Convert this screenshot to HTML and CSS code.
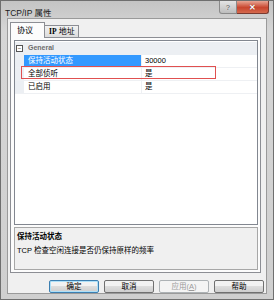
FILE: index.html
```html
<!DOCTYPE html>
<html lang="zh-CN">
<head>
    <meta charset="UTF-8">
    <title>TCP/IP 属性</title>
    <link rel="stylesheet" href="styles.css">
</head>
<body>
    <div class="window">
        <div class="titlebar">
            <span class="title">TCP/IP 属性</span>
            <div class="caption-btns">
                <span class="cap help">?</span>
                <span class="cap close">✕</span>
            </div>
        </div>
        <div class="client">
            <div class="tabs">
                <span class="tab active">协议</span>
                <span class="tab"><b>IP</b> 地址</span>
            </div>
            <div class="panel">
                <div class="grid">
                    <div class="row category">
                        <span class="margin"><span class="toggle">−</span></span>
                        <span class="cat-name">General</span>
                    </div>
                    <div class="row selected">
                        <span class="margin"></span>
                        <span class="name">保持活动状态</span>
                        <span class="value">30000</span>
                    </div>
                    <div class="row marked">
                        <span class="margin"></span>
                        <span class="name">全部侦听</span>
                        <span class="value">是</span>
                        <span class="mark"></span>
                    </div>
                    <div class="row">
                        <span class="margin"></span>
                        <span class="name">已启用</span>
                        <span class="value">是</span>
                    </div>
                </div>
                <div class="desc">
                    <div class="desc-title">保持活动状态</div>
                    <div class="desc-text">TCP 检查空闲连接是否仍保持原样的频率</div>
                </div>
            </div>
            <div class="buttons">
                <button class="btn default">确定</button>
                <button class="btn">取消</button>
                <button class="btn" disabled>应用(<u>A</u>)</button>
                <button class="btn">帮助</button>
            </div>
        </div>
    </div>
</body>
</html>
```

FILE: styles.css
```css
body {
    margin: 0;
    font-family: "Liberation Sans", "Noto Sans CJK SC", sans-serif;
    font-size: 7.5px;
    color: #000;
}
.window {
    width: 274px;
    height: 300px;
    box-sizing: border-box;
    border: 1px solid #6f6f6f;
    background: linear-gradient(#c4c4c4, #d6d6d6 30px, #cfcfcf);
    display: flex;
    flex-direction: column;
}
.titlebar {
    height: 19px;
    display: flex;
    justify-content: space-between;
    align-items: flex-start;
}
.title {
    font-size: 8.5px;
    margin: 5px 0 0 4px;
    color: #1a1a1a;
}
.caption-btns {
    display: flex;
    margin-right: 4px;
}
.cap {
    height: 12px;
    display: flex;
    align-items: center;
    justify-content: center;
    border: 1px solid #8a8a8a;
    border-top: none;
    font-weight: bold;
    color: #fff;
}
.help {
    width: 16px;
    border-radius: 0 0 0 3px;
    background: linear-gradient(#e4e4e4, #bdbdbd);
    color: #7a7a7a;
    font-size: 8px;
    text-shadow: 0 0 1px #fff;
}
.close {
    width: 31px;
    border-left: none;
    border-color: #7a3a30;
    border-radius: 0 0 3px 0;
    background: linear-gradient(#e8a594, #c8452e 55%, #d56a4e);
    font-size: 8px;
    text-shadow: 0 0 1px #5a1a10;
}
.client {
    flex: 1;
    margin: 0 6px 6px;
    border: 1px solid #9a9a9a;
    background: #f0f0f0;
    display: flex;
    flex-direction: column;
}
.tabs {
    display: flex;
    align-items: flex-end;
    margin: 3px 0 0 2px;
    height: 16px;
    position: relative;
    z-index: 1;
}
.tab {
    box-sizing: border-box;
    width: 34px;
    height: 12px;
    padding-left: 4px;
    white-space: nowrap;
    border: 1px solid #8c8e94;
    border-bottom: none;
    border-left: none;
    background: linear-gradient(#f2f2f2, #dcdcdc);
    font-size: 8px;
    line-height: 11px;
    margin-bottom: 1px;
}
.tab b {
    font-family: "Liberation Serif", serif;
    font-size: 7.5px;
}
.tab.active {
    width: 35px;
    height: 16px;
    padding-left: 6px;
    border-left: 1px solid #8c8e94;
    background: #fcfcfc;
    margin-bottom: 0;
    line-height: 15px;
}
.panel {
    margin: -1px 5px 0 2px;
    height: 230px;
    border: 1px solid #8c8e94;
    background: #fcfcfc;
    padding: 2px 2px 2px 3px;
    display: flex;
    flex-direction: column;
    gap: 2px;
}
.grid {
    height: 183px;
    border: 1px solid #828790;
    background: #fff;
    padding-top: 1px;
}
.row {
    display: flex;
    height: 12px;
    border-bottom: 1px solid #eef0f3;
    line-height: 12px;
    position: relative;
}
.margin {
    width: 9px;
    background: #eceff3;
    display: flex;
    align-items: center;
    justify-content: center;
}
.toggle {
    width: 5px;
    height: 5px;
    border: 1px solid #555;
    background: #fff;
    font-size: 6px;
    line-height: 4px;
    text-align: center;
    color: #222;
}
.category {
    background: #eceff3;
    border-bottom-color: #eceff3;
}
.cat-name {
    font-weight: bold;
    color: #6d6d6d;
    padding-left: 4px;
    font-size: 7px;
}
.name {
    width: 113px;
    padding-left: 4px;
    border-right: 1px solid #eef0f3;
}
.value {
    padding-left: 3px;
}
.selected .name {
    background: #3399ff;
    color: #fff;
}
.mark {
    position: absolute;
    left: 6px;
    top: -2px;
    width: 193px;
    height: 11px;
    border: 1px solid #e05050;
}
.desc {
    height: 37px;
    border: 1px solid #a7a7a7;
    background: #f0f0f0;
    padding: 2px 2px;
}
.desc-title {
    font-weight: bold;
    height: 12px;
    line-height: 12px;
    margin-top: 1px;
}
.desc-text {
    margin-top: 2px;
    line-height: 12px;
}
.buttons {
    display: flex;
    justify-content: flex-end;
    gap: 5px;
    margin: 7px 2px 0 0;
}
.btn {
    width: 50px;
    height: 13px;
    padding: 0;
    font-family: inherit;
    font-size: 7.5px;
    line-height: 11px;
    color: #000;
    border: 1px solid #707070;
    border-radius: 2px;
    background: linear-gradient(#f2f2f2 45%, #dddddd 50%, #cfcfcf);
}
.btn.default {
    border-color: #3c7fb1;
    box-shadow: inset 0 0 0 1px #aee0f8;
}
.btn:disabled {
    color: #9a9a9a;
    border-color: #adb2b5;
    background: #f4f4f4;
}
```
